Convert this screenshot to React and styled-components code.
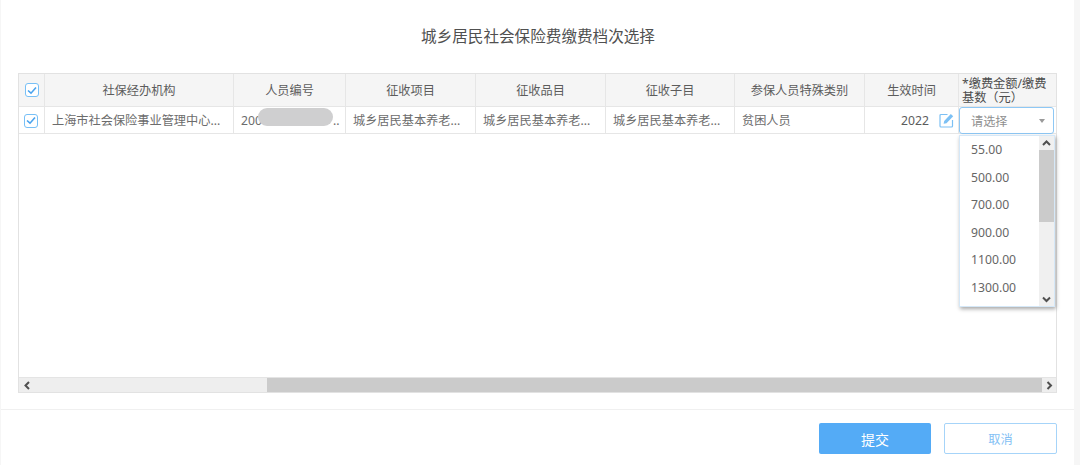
import React from "react";
import styled, { createGlobalStyle } from "styled-components";

const columns = [
  { title: "社保经办机构", value: "上海市社会保险事业管理中心...", width: 189 },
  { title: "人员编号", value: "200", width: 112, masked: true },
  { title: "征收项目", value: "城乡居民基本养老...", width: 130 },
  { title: "征收品目", value: "城乡居民基本养老...", width: 130 },
  { title: "征收子目", value: "城乡居民基本养老...", width: 129 },
  { title: "参保人员特殊类别", value: "贫困人员", width: 130 },
];

const amounts = ["55.00", "500.00", "700.00", "900.00", "1100.00", "1300.00"];

function CheckBox({ small }) {
  return (
    <Check $small={small}>
      <svg width="10" height="9" viewBox="0 0 10 9">
        <path d="M1 4.5 L4 7.2 L9 1.5" fill="none" stroke="#4aa3ee" strokeWidth="1.6" />
      </svg>
    </Check>
  );
}

function Chevron({ dir }) {
  const paths = {
    up: "M1 5 L4.5 1.5 L8 5",
    down: "M1 1.5 L4.5 5 L8 1.5",
    left: "M5 1 L1.5 4.5 L5 8",
    right: "M1.5 1 L5 4.5 L1.5 8",
  };
  const vertical = dir === "up" || dir === "down";
  return (
    <svg width={vertical ? 9 : 7} height={vertical ? 7 : 9} viewBox={vertical ? "0 0 9 7" : "0 0 7 9"}>
      <path d={paths[dir]} fill="none" stroke="#505050" strokeWidth="2" />
    </svg>
  );
}

function EditIcon() {
  return (
    <svg width="15" height="15" viewBox="0 0 15 15">
      <path d="M8.5 1.5 H2 a1 1 0 0 0 -1 1 V13 a1 1 0 0 0 1 1 H12.5 a1 1 0 0 0 1 -1 V7" fill="none" stroke="#7cc0f4" strokeWidth="1.2" />
      <path d="M5.2 8 L11.8 1 L14.2 3.2 L7.5 10.2 L4.6 10.8 Z" fill="#7cc0f4" />
    </svg>
  );
}

export default function App() {
  return (
    <Page>
      <GlobalStyle />
      <Dialog>
        <Title>城乡居民社会保险费缴费档次选择</Title>
        <Table>
          <HeadRow>
            <HeadCell $w={26}>
              <CheckBox />
            </HeadCell>
            {columns.map((c) => (
              <HeadCell key={c.title} $w={c.width}>
                {c.title}
              </HeadCell>
            ))}
            <HeadCell $w={94}>生效时间</HeadCell>
            <AmountHead>*缴费金额/缴费基数（元）</AmountHead>
          </HeadRow>
          <BodyRow>
            <Cell $w={26} $center>
              <CheckBox small />
            </Cell>
            {columns.map((c) => (
              <Cell key={c.title} $w={c.width}>
                {c.value}
                {c.masked && <Mask />}
                {c.masked && <MaskTail>..</MaskTail>}
              </Cell>
            ))}
            <YearCell>
              2022
              <EditIcon />
            </YearCell>
            <SelectCell>
              <Select>
                请选择
                <Caret />
              </Select>
              <Dropdown>
                <Options>
                  {amounts.map((a) => (
                    <Option key={a}>{a}</Option>
                  ))}
                </Options>
                <VBar>
                  <VButton>
                    <Chevron dir="up" />
                  </VButton>
                  <VThumb />
                  <VTrack />
                  <VButton>
                    <Chevron dir="down" />
                  </VButton>
                </VBar>
              </Dropdown>
            </SelectCell>
          </BodyRow>
          <Empty />
          <HBar>
            <HButton $w={16}>
              <Chevron dir="left" />
            </HButton>
            <HTrack />
            <HThumb />
            <HButton $w={14}>
              <Chevron dir="right" />
            </HButton>
          </HBar>
        </Table>
        <Footer>
          <Submit>提交</Submit>
          <Cancel>取消</Cancel>
        </Footer>
      </Dialog>
    </Page>
  );
}

const GlobalStyle = createGlobalStyle`
  html, body {
    margin: 0;
    padding: 0;
    background: #fff;
  }
`;

const Page = styled.div`
  width: 1080px;
  height: 465px;
  overflow: hidden;
  display: flex;
  background: #f6f6f6;
  font-family: "Noto Sans", "Noto Sans CJK SC", sans-serif;
  font-size: 12.2px;
  color: #606060;
`;

const Dialog = styled.div`
  width: 1073px;
  margin-left: 1px;
  background: #fff;
  display: flex;
  flex-direction: column;
`;

const Title = styled.div`
  height: 73px;
  padding: 25px 0 0 1px;
  box-sizing: border-box;
  text-align: center;
  font-size: 15.6px;
  line-height: 22px;
  color: #505050;
`;

const Table = styled.div`
  width: 1039px;
  height: 320px;
  margin-left: 17px;
  box-sizing: border-box;
  border: 1px solid #e2e2e2;
  display: flex;
  flex-direction: column;
`;

const HeadRow = styled.div`
  height: 33px;
  box-sizing: border-box;
  display: flex;
  background: #f5f5f5;
  border-bottom: 1px solid #e6e6e6;
`;

const HeadCell = styled.div`
  width: ${(p) => p.$w}px;
  box-sizing: border-box;
  border-right: 1px solid #e6e6e6;
  display: flex;
  align-items: center;
  justify-content: center;
  color: #5c5c5c;
`;

/* TC font: its full-width brackets sit centred in the cell, as in the picture */
const AmountHead = styled.div`
  flex: 1;
  padding: 3px 6px 0 3px;
  box-sizing: border-box;
  line-height: 14px;
  color: #4d4d4d;
  font-family: "Noto Sans", "Noto Sans CJK TC", sans-serif;
`;

const BodyRow = styled.div`
  height: 27px;
  display: flex;
  border-bottom: 1px solid #e6e6e6;
  box-sizing: border-box;
`;

const Cell = styled.div`
  position: relative;
  width: ${(p) => p.$w}px;
  box-sizing: border-box;
  border-right: 1px solid #e6e6e6;
  display: flex;
  align-items: center;
  justify-content: ${(p) => (p.$center ? "center" : "flex-start")};
  padding: ${(p) => (p.$center ? "0" : "0 7px")};
  white-space: nowrap;
  color: #6c6c6c;
`;

const Mask = styled.span`
  position: absolute;
  left: 24px;
  top: 1px;
  width: 75px;
  height: 18px;
  border-radius: 9px;
  background: #cfcfd0;
`;

const MaskTail = styled.span`
  position: absolute;
  left: 99px;
  top: 5px;
`;

const YearCell = styled.div`
  width: 94px;
  box-sizing: border-box;
  border-right: 1px solid #e6e6e6;
  display: flex;
  align-items: center;
  justify-content: flex-end;
  gap: 10px;
  padding-right: 4px;
  color: #5c5c5c;
`;

const SelectCell = styled.div`
  position: relative;
  flex: 1;
`;

const Select = styled.div`
  height: 27px;
  width: 95px;
  box-sizing: border-box;
  border: 1px solid #8ec8f5;
  border-radius: 3px;
  background: #fff;
  display: flex;
  align-items: center;
  justify-content: space-between;
  padding: 0 8px 0 11px;
  color: #8f8f8f;
`;

const Caret = styled.span`
  width: 0;
  height: 0;
  border-left: 3.5px solid transparent;
  border-right: 3.5px solid transparent;
  border-top: 4px solid #9a9a9a;
`;

const Dropdown = styled.div`
  position: absolute;
  top: 28px;
  left: 0;
  width: 96px;
  height: 172px;
  box-sizing: border-box;
  background: #fff;
  border: 1px solid #d5e8f8;
  box-shadow: 1px 2px 4px rgba(0, 0, 0, 0.35);
  display: flex;
  z-index: 2;
`;

const Options = styled.div`
  flex: 1;
`;

const Option = styled.div`
  height: 27.6px;
  line-height: 27.6px;
  padding-left: 11px;
  color: #666;
`;

const VBar = styled.div`
  width: 15px;
  display: flex;
  flex-direction: column;
  background: #f0f0f0;
`;

const VButton = styled.div`
  height: 14px;
  display: flex;
  align-items: center;
  justify-content: center;
`;

const VThumb = styled.div`
  height: 72px;
  background: #cbcbcb;
`;

const VTrack = styled.div`
  flex: 1;
`;

const Empty = styled.div`
  flex: 1;
`;

const HBar = styled.div`
  height: 15px;
  box-sizing: border-box;
  display: flex;
  background: #eee;
  border-top: 1px solid #e4e4e4;
`;

const HButton = styled.div`
  width: ${(p) => p.$w}px;
  display: flex;
  align-items: center;
  justify-content: center;
`;

const HTrack = styled.div`
  width: 232px;
`;

const HThumb = styled.div`
  flex: 1;
  background: #cbcbcb;
`;

const Footer = styled.div`
  margin-top: 16px;
  flex: 1;
  border-top: 1px solid #f0f0f0;
  display: flex;
  justify-content: flex-end;
  gap: 13px;
  padding: 13px 17px 0 0;
  align-items: flex-start;
`;

const Submit = styled.div`
  width: 112px;
  height: 31px;
  border-radius: 2px;
  background: #54abf6;
  color: #fff;
  font-size: 14px;
  display: flex;
  align-items: center;
  justify-content: center;
`;

const Cancel = styled(Submit)`
  width: 113px;
  box-sizing: border-box;
  background: #fff;
  border: 1px solid #a6d4f9;
  color: #83bff5;
  font-size: 12.2px;
`;

const Check = styled.span`
  width: 14px;
  height: 14px;
  box-sizing: border-box;
  border: 1.5px solid #78c0f6;
  border-radius: 3px;
  background: #fff;
  display: flex;
  align-items: center;
  justify-content: center;
  margin-left: ${(p) => (p.$small ? "-1px" : "1px")};
  margin-top: ${(p) => (p.$small ? "1px" : "0")};
`;
